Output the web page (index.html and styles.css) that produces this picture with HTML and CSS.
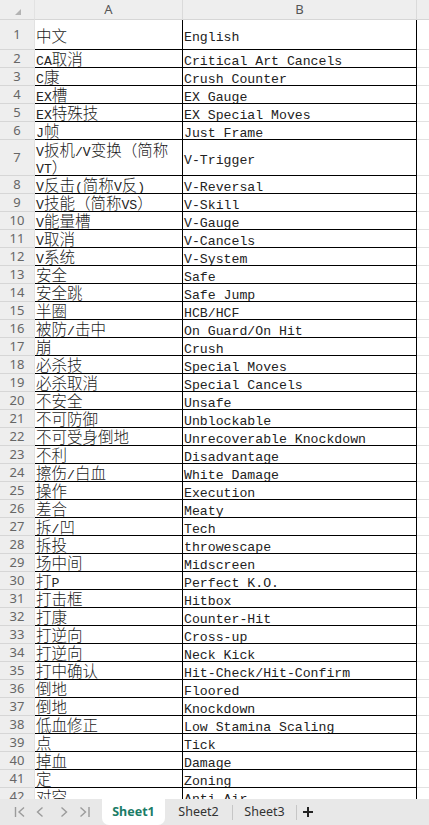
FILE: index.html
```html
<!DOCTYPE html>
<html lang="zh-CN">
<head>
    <meta charset="UTF-8">
    <meta name="viewport" content="width=device-width, initial-scale=1.0">
    <title>术语对照表</title>
    <link rel="stylesheet" href="styles.css">
</head>
<body>
    <div class="sheet">
        <div class="grid-wrap">
            <table class="grid">
                <colgroup>
                    <col class="c-rh">
                    <col class="c-a">
                    <col class="c-b">
                    <col class="c-c">
                </colgroup>
                <thead>
                    <tr>
                        <th class="corner"><span class="tri"></span></th>
                        <th>A</th>
                        <th>B</th>
                        <th></th>
                    </tr>
                </thead>
                <tbody>
                    <tr class="r-title"><th>1</th><td class="a">中文</td><td class="b">English</td><td></td></tr>
                    <tr><th>2</th><td class="a"><span class="en">CA</span>取消</td><td class="b">Critical Art Cancels</td><td></td></tr>
                    <tr><th>3</th><td class="a"><span class="en">C</span>康</td><td class="b">Crush Counter</td><td></td></tr>
                    <tr><th>4</th><td class="a"><span class="en">EX</span>槽</td><td class="b">EX Gauge</td><td></td></tr>
                    <tr><th>5</th><td class="a"><span class="en">EX</span>特殊技</td><td class="b">EX Special Moves</td><td></td></tr>
                    <tr><th>6</th><td class="a"><span class="en">J</span>帧</td><td class="b">Just Frame</td><td></td></tr>
                    <tr class="r-wrap"><th>7</th><td class="a"><span class="en">V</span>扳机<span class="en">/V</span>变换（简称<br><span class="en">VT</span>）</td><td class="b">V-Trigger</td><td></td></tr>
                    <tr><th>8</th><td class="a"><span class="en">V</span>反击<span class="en">(</span>简称<span class="en">V</span>反<span class="en">)</span></td><td class="b">V-Reversal</td><td></td></tr>
                    <tr><th>9</th><td class="a"><span class="en">V</span>技能（简称<span class="en">VS</span>）</td><td class="b">V-Skill</td><td></td></tr>
                    <tr><th>10</th><td class="a"><span class="en">V</span>能量槽</td><td class="b">V-Gauge</td><td></td></tr>
                    <tr><th>11</th><td class="a"><span class="en">V</span>取消</td><td class="b">V-Cancels</td><td></td></tr>
                    <tr><th>12</th><td class="a"><span class="en">V</span>系统</td><td class="b">V-System</td><td></td></tr>
                    <tr><th>13</th><td class="a">安全</td><td class="b">Safe</td><td></td></tr>
                    <tr><th>14</th><td class="a">安全跳</td><td class="b">Safe Jump</td><td></td></tr>
                    <tr><th>15</th><td class="a">半圈</td><td class="b">HCB/HCF</td><td></td></tr>
                    <tr><th>16</th><td class="a">被防<span class="en">/</span>击中</td><td class="b">On Guard/On Hit</td><td></td></tr>
                    <tr><th>17</th><td class="a">崩</td><td class="b">Crush</td><td></td></tr>
                    <tr><th>18</th><td class="a">必杀技</td><td class="b">Special Moves</td><td></td></tr>
                    <tr><th>19</th><td class="a">必杀取消</td><td class="b">Special Cancels</td><td></td></tr>
                    <tr><th>20</th><td class="a">不安全</td><td class="b">Unsafe</td><td></td></tr>
                    <tr><th>21</th><td class="a">不可防御</td><td class="b">Unblockable</td><td></td></tr>
                    <tr><th>22</th><td class="a">不可受身倒地</td><td class="b">Unrecoverable Knockdown</td><td></td></tr>
                    <tr><th>23</th><td class="a">不利</td><td class="b">Disadvantage</td><td></td></tr>
                    <tr><th>24</th><td class="a">擦伤<span class="en">/</span>白血</td><td class="b">White Damage</td><td></td></tr>
                    <tr><th>25</th><td class="a">操作</td><td class="b">Execution</td><td></td></tr>
                    <tr><th>26</th><td class="a">差合</td><td class="b">Meaty</td><td></td></tr>
                    <tr><th>27</th><td class="a">拆<span class="en">/</span>凹</td><td class="b">Tech</td><td></td></tr>
                    <tr><th>28</th><td class="a">拆投</td><td class="b">throwescape</td><td></td></tr>
                    <tr><th>29</th><td class="a">场中间</td><td class="b">Midscreen</td><td></td></tr>
                    <tr><th>30</th><td class="a">打<span class="en">P</span></td><td class="b">Perfect K.O.</td><td></td></tr>
                    <tr><th>31</th><td class="a">打击框</td><td class="b">Hitbox</td><td></td></tr>
                    <tr><th>32</th><td class="a">打康</td><td class="b">Counter-Hit</td><td></td></tr>
                    <tr><th>33</th><td class="a">打逆向</td><td class="b">Cross-up</td><td></td></tr>
                    <tr><th>34</th><td class="a">打逆向</td><td class="b">Neck Kick</td><td></td></tr>
                    <tr><th>35</th><td class="a">打中确认</td><td class="b">Hit-Check/Hit-Confirm</td><td></td></tr>
                    <tr><th>36</th><td class="a">倒地</td><td class="b">Floored</td><td></td></tr>
                    <tr><th>37</th><td class="a">倒地</td><td class="b">Knockdown</td><td></td></tr>
                    <tr class="active"><th>38</th><td class="a">低血修正</td><td class="b">Low Stamina Scaling</td><td></td></tr>
                    <tr><th>39</th><td class="a">点</td><td class="b">Tick</td><td></td></tr>
                    <tr><th>40</th><td class="a">掉血</td><td class="b">Damage</td><td></td></tr>
                    <tr><th>41</th><td class="a">定</td><td class="b">Zoning</td><td></td></tr>
                    <tr><th>42</th><td class="a">对空</td><td class="b">Anti-Air</td><td></td></tr>
                </tbody>
            </table>
        </div>

        <div class="tabs">
            <svg class="nav" width="102" height="26" viewBox="0 0 102 26">
                <!-- first / prev / next / last -->
                <path d="M15.5 8v10M24 8.5l-5 4.5 5 4.5" />
                <path d="M42.5 8.5l-5 4.5 5 4.5" />
                <path d="M61.5 8.5l5 4.5-5 4.5" />
                <path d="M80.5 8.5l5 4.5-5 4.5M89 8v10" />
            </svg>
            <div class="tab current">Sheet1</div>
            <div class="tab t2">Sheet2</div>
            <span class="sep"></span>
            <div class="tab t3">Sheet3</div>
            <span class="sep"></span>
            <div class="add">
                <svg width="12" height="12" viewBox="0 0 12 12">
                    <path d="M6 1v10M1 6h10" />
                </svg>
            </div>
        </div>
    </div>
</body>
</html>
```

FILE: styles.css
```css
html, body {
    margin: 0;
    height: 100%;
    overflow: hidden;
    background: #fff;
}

.sheet {
    display: flex;
    flex-direction: column;
    height: 825px;
}

.grid-wrap {
    flex: 1;
    overflow: hidden;
}

.grid {
    border-collapse: separate;
    border-spacing: 0;
    table-layout: fixed;
    width: 477px;
}

.c-rh { width: 35px; }
.c-a  { width: 148px; }
.c-b  { width: 234px; }
.c-c  { width: 60px; }

.grid th,
.grid td {
    box-sizing: border-box;
    padding: 0;
    height: 18px;
    white-space: nowrap;
    overflow: hidden;
    vertical-align: middle;
}

/* column letters */
.grid thead th {
    height: 20px;
    background: #eeeeee;
    border-right: 1px solid #dadada;
    border-bottom: 1px solid #d6d6d6;
    font: 13px/19px "Noto Sans", sans-serif;
    color: #555;
    text-align: center;
}

.grid thead th:first-child {
    border-right-color: #e2e2e2;
}

.corner {
    position: relative;
}

.tri {
    position: absolute;
    left: 15px;
    top: 9px;
    width: 0;
    height: 0;
    border-left: 6px solid transparent;
    border-bottom: 6px solid #b3b3b3;
}

/* row numbers */
.grid tbody th {
    background: #eeeeee;
    border-right: 1px solid #e2e2e2;
    border-bottom: 1px solid #d6d6d6;
    font: 13px/17px "Noto Sans", sans-serif;
    color: #666;
    text-align: center;
}

.grid td {
    border-bottom: 1px solid #e2e2e2;
    color: #1a1a1a;
    line-height: 17px;
}

.grid td.a,
.grid td.b {
    border-right: 1px solid #000;
    border-bottom: 1px solid #000;
}

.grid td.a {
    padding-left: 1px;
    font: 300 15.5px/17px "Noto Sans CJK SC", sans-serif;
}

/* mono text sits a little low in its cell, like the cjk glyphs beside it */
.grid td.b {
    padding: 6px 0 0 1px;
    font: 13.2px/11px "Liberation Mono", monospace;
    color: #222;
}

/* latin letters mixed into the chinese column */
.grid td.a .en {
    font: 13.2px/0 "Liberation Mono", monospace;
    color: #222;
}

.r-title th,
.r-title td {
    height: 30px;
}

.r-title td.a {
    padding-top: 2px;
}

.r-wrap th,
.r-wrap td {
    height: 36px;
}

.r-wrap td.a {
    white-space: normal;
}

.active th {
    background: #e0e0e0;
    color: #1b7d69;
    border-right: 2px solid #1f9374;
}

/* sheet tabs */
.tabs {
    flex: 0 0 26px;
    display: flex;
    align-items: center;
    background: #e8e8e8;
    font: 12.5px "Noto Sans", sans-serif;
    color: #333;
}

.nav {
    flex: none;
}

.nav path {
    fill: none;
    stroke: #9b9b9b;
    stroke-width: 1.4;
}

.tab {
    height: 26px;
    line-height: 26px;
    text-align: center;
}

.tab.current {
    width: 63px;
    background: #fff;
    border-radius: 0 0 7px 7px;
    color: #1a7c67;
    font-weight: bold;
}

.tab.t2 {
    width: 67px;
}

.tab.t3 {
    width: 63px;
}

.sep {
    width: 1px;
    height: 15px;
    background: #c6c6c6;
}

.add {
    width: 22px;
    display: flex;
    justify-content: center;
}

.add path {
    stroke: #222;
    stroke-width: 2;
}
```
